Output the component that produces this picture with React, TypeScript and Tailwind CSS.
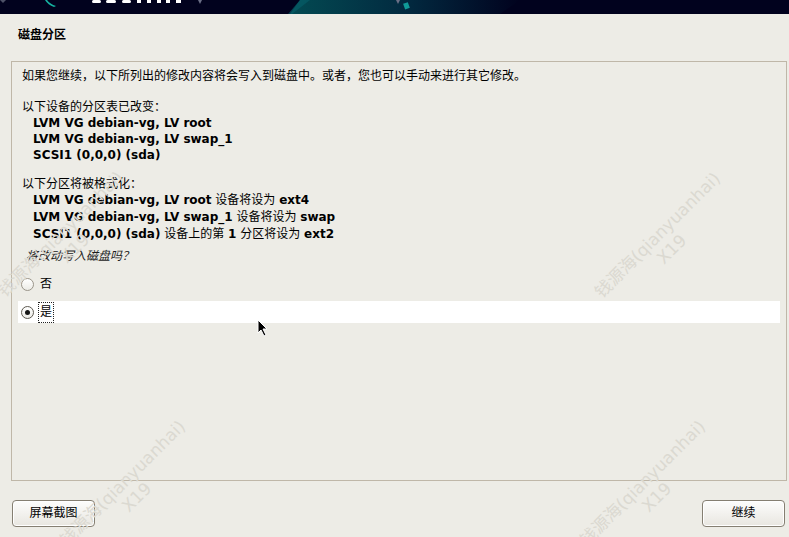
import React from "react";

const font = { fontFamily: '"DejaVu Sans", "Noto Sans CJK SC", sans-serif' };

function Banner() {
  return (
    <div className="h-[14px] shrink-0 bg-[#01021e] overflow-hidden">
      <svg width="789" height="14" viewBox="0 0 789 14">
        <defs>
          <linearGradient id="tealfade" x1="0" x2="1" y1="0" y2="0">
            <stop offset="0" stopColor="#034a52" />
            <stop offset="0.5" stopColor="#022a40" />
            <stop offset="1" stopColor="#01021e" />
          </linearGradient>
        </defs>
        <path d="M47 0 Q 50 4 56 6 L 54 7 Q 48 5 45 0 Z" fill="#15b3a1" />
        <path d="M290 14 L 300 0 L 520 0 L 500 14 Z" fill="url(#tealfade)" />
        <path d="M300 0 L 310 0 L 292 14 L 288 14 Z" fill="#06616a" opacity="0.6" />
        <rect x="404" y="3" width="5" height="6" fill="#109b98" transform="rotate(-20 406 6)" />
        <path d="M198 0 L 200 4 L 202 0 Z" fill="#6b6f86" />
        <path d="M396 0 L 398 4 L 400 0 Z" fill="#6b6f86" />
        <path d="M0 0 L 3 3 L 6 0 Z" fill="#4d5167" />
        <g fill="#ffffff">
          <rect x="92" y="0" width="9" height="3" rx="1.5" />
          <rect x="106" y="0" width="10" height="3" rx="1.5" />
          <rect x="122" y="0" width="9" height="3" rx="1.5" />
          <rect x="137" y="0" width="4" height="3" />
          <rect x="147" y="0" width="4" height="3" />
          <rect x="157" y="0" width="4" height="3" />
          <rect x="166" y="0" width="4" height="3" />
          <rect x="176" y="0" width="5" height="3" />
        </g>
      </svg>
    </div>
  );
}

function Radio({ checked }: { checked?: boolean }) {
  return (
    <span
      className={
        "flex h-[13px] w-[13px] items-center justify-center rounded-full border bg-gradient-to-b from-[#ffffff] to-[#ecebe6] " +
        (checked ? "border-[#5d5950]" : "border-[#9a958a]")
      }
    >
      {checked && <span className="h-[5px] w-[5px] rounded-full bg-[#141414]" />}
    </span>
  );
}

function Watermark({ className }: { className: string }) {
  return (
    <div
      aria-hidden="true"
      className={
        "pointer-events-none absolute flex -rotate-45 select-none flex-col items-center text-[17px] leading-[20px] text-[#dbd9d1] " +
        className
      }
    >
      <span>钱源海(qianyuanhai)</span>
      <span>X19</span>
    </div>
  );
}

function Cursor() {
  return (
    <svg className="pointer-events-none absolute left-[257px] top-[319px]" width="12" height="18" viewBox="0 0 12 18">
      <path d="M1 1 L1 14 L4 11 L7 17 L9 16 L6 10 L10 10 Z" fill="#000" stroke="#fff" strokeWidth="1" />
    </svg>
  );
}

export default function App() {
  return (
    <div className="relative flex h-[537px] w-[789px] flex-col overflow-hidden bg-[#edece6] text-[12px] text-black" style={font}>
      <Banner />

      <div className="flex h-[47px] shrink-0 items-center pb-[5px] pl-[18px] font-bold">磁盘分区</div>

      <div className="ml-[11px] mr-[2px] h-[420px] shrink-0 border border-[#bfb7a8] px-[10px] pt-[6px]">
        <p className="leading-[16px]">如果您继续，以下所列出的修改内容将会写入到磁盘中。或者，您也可以手动来进行其它修改。</p>

        <p className="mt-[15px] leading-[16px]">以下设备的分区表已改变：</p>
        <div className="pl-[11px] font-bold leading-[16px]">
          <p>LVM VG debian-vg, LV root</p>
          <p>LVM VG debian-vg, LV swap_1</p>
          <p>SCSI1 (0,0,0) (sda)</p>
        </div>

        <p className="mt-[13px] leading-[16px]">以下分区将被格式化：</p>
        <div className="pl-[11px] leading-[17px]">
          <p>
            <b>LVM VG debian-vg, LV root</b> 设备将设为 <b>ext4</b>
          </p>
          <p>
            <b>LVM VG debian-vg, LV swap_1</b> 设备将设为 <b>swap</b>
          </p>
          <p>
            <b>SCSI1 (0,0,0) (sda)</b> 设备上的第 <b>1</b> 分区将设为 <b>ext2</b>
          </p>
        </div>

        <p className="mt-[5px] pl-[4px] italic leading-[16px] text-[#1c1c1c]">将改动写入磁盘吗？</p>

        <div className="-mx-[4px] mt-[9px] flex flex-col gap-[6px]">
          <div className="flex h-[22px] items-center gap-[6px] pl-[3px]">
            <Radio />
            <span>否</span>
          </div>
          <div className="flex h-[22px] items-center gap-[4px] bg-white pl-[3px]">
            <Radio checked />
            <span className="border border-dotted border-[#222] px-[1px] leading-[19px]">是</span>
          </div>
        </div>
      </div>

      <div className="flex flex-1 items-center justify-between pl-[12px] pr-[4px] pt-[8px]">
        <button className="h-[27px] w-[83px] rounded-[4px] border border-[#857f72] bg-gradient-to-b from-[#fdfdfc] to-[#e8e6e0] shadow-[inset_0_0_0_1px_#ffffff]">
          屏幕截图
        </button>
        <button className="h-[27px] w-[83px] rounded-[4px] border border-[#857f72] bg-gradient-to-b from-[#fdfdfc] to-[#e8e6e0] shadow-[inset_0_0_0_1px_#ffffff]">
          继续
        </button>
      </div>

      <Watermark className="left-[-17px] top-[221px]" />
      <Watermark className="left-[580px] top-[222px]" />
      <Watermark className="left-[45px] top-[470px]" />
      <Watermark className="left-[565px] top-[470px]" />
      <Cursor />
    </div>
  );
}
